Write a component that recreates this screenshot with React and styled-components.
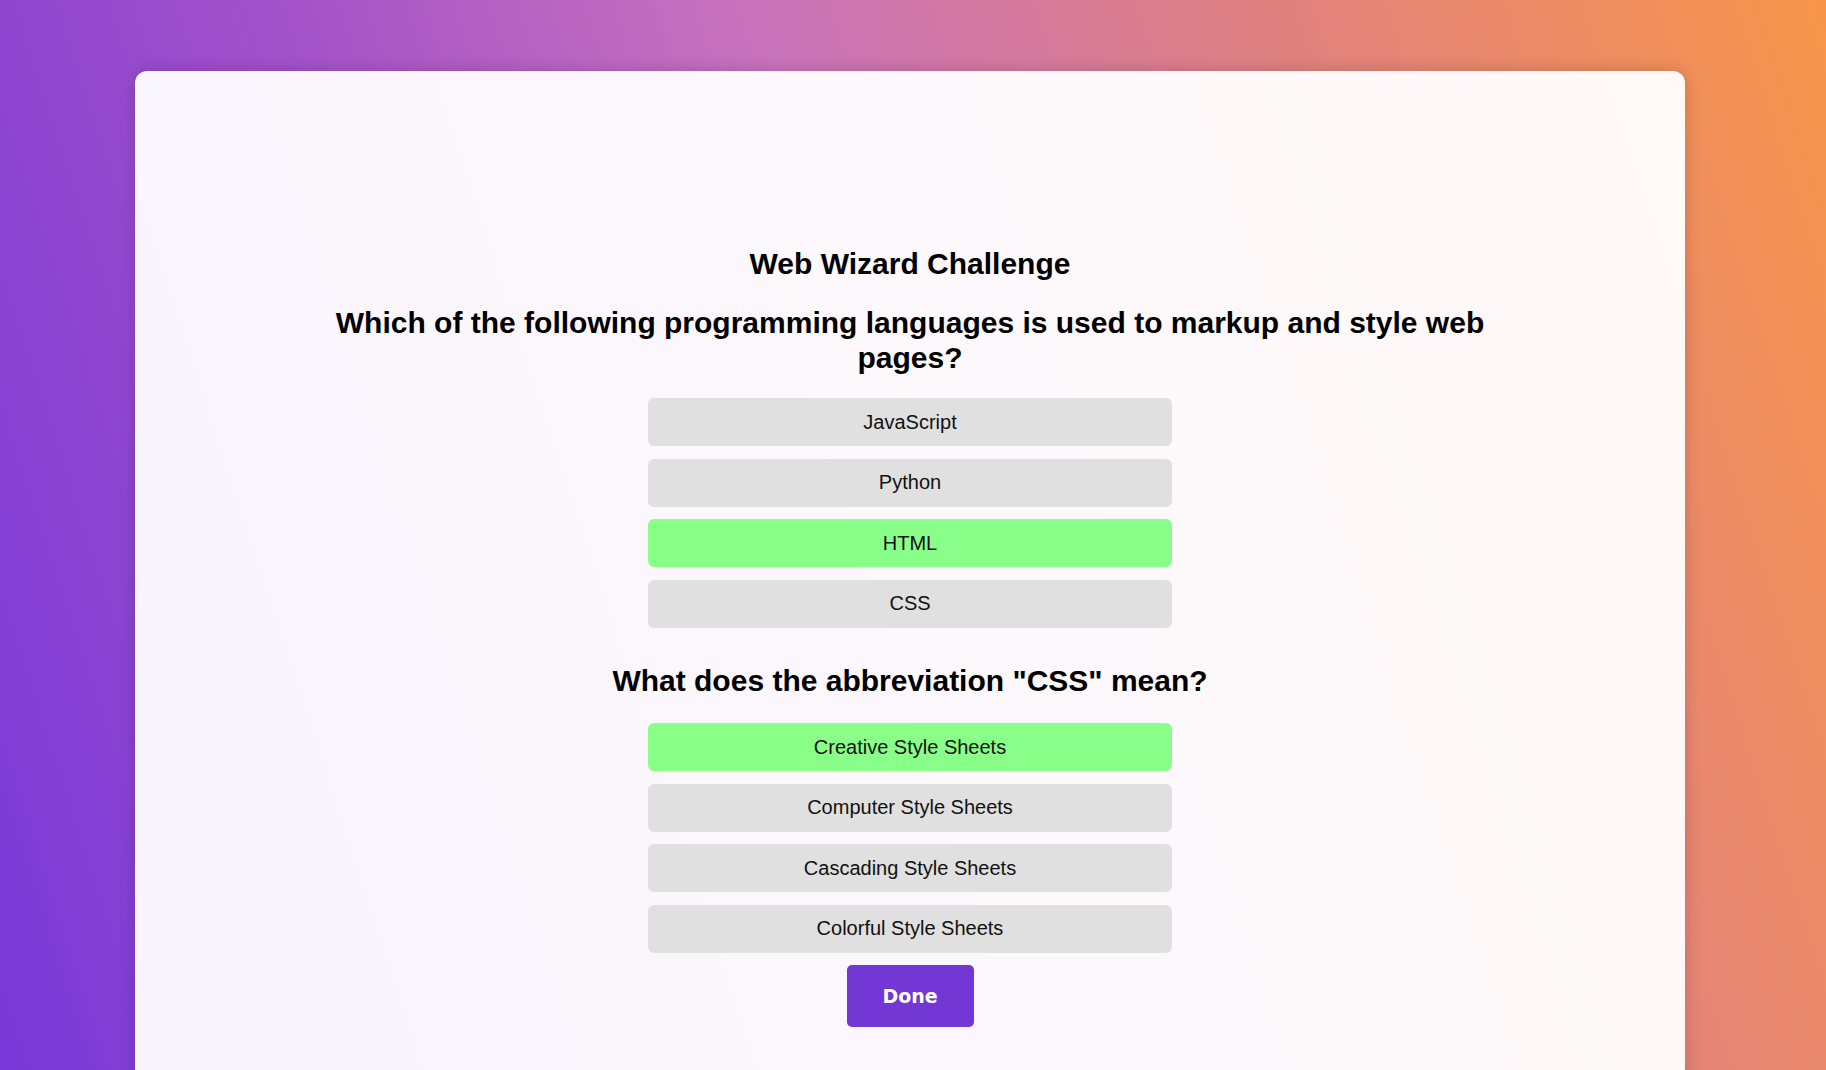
import React from "react";
import styled, { createGlobalStyle } from "styled-components";

const questions = [
  {
    text: "Which of the following programming languages is used to markup and style web pages?",
    options: ["JavaScript", "Python", "HTML", "CSS"],
    picked: "HTML",
  },
  {
    text: 'What does the abbreviation "CSS" mean?',
    options: [
      "Creative Style Sheets",
      "Computer Style Sheets",
      "Cascading Style Sheets",
      "Colorful Style Sheets",
    ],
    picked: "Creative Style Sheets",
  },
];

// Quiz page
function App() {
  const [answers, setAnswers] = React.useState(
    questions.map((q) => q.picked)
  );

  const pick = (qi, option) => {
    const next = [...answers];
    next[qi] = option;
    setAnswers(next);
  };

  return (
    <>
      <GlobalStyle />
      <Page>
        <Card>
          <Title>Web Wizard Challenge</Title>

          {questions.map((q, qi) => (
            <QuestionBlock key={qi} first={qi === 0}>
              <Question first={qi === 0}>{q.text}</Question>
              <OptionList>
                {q.options.map((option) => (
                  <Option
                    key={option}
                    selected={answers[qi] === option}
                    onClick={() => pick(qi, option)}
                  >
                    {option}
                  </Option>
                ))}
              </OptionList>
            </QuestionBlock>
          ))}

          <DoneButton>Done</DoneButton>
        </Card>
      </Page>
    </>
  );
}

// css styles
const GlobalStyle = createGlobalStyle`
  html, body {
    margin: 0;
    padding: 0;
  }
  body {
    font-family: "Liberation Sans", Arial, sans-serif;
    overflow-x: hidden;
  }
`;

const Page = styled.div`
  min-height: 100vh;
  box-sizing: border-box;
  padding: 71px 141px 40px 135px;
  background: linear-gradient(72deg, #7839d9 0%, #a151c9 28%, #c872bc 50%, #e2827c 76%, #f7964a 100%);
  background-attachment: fixed;
`;

const Card = styled.div`
  display: flex;
  flex-direction: column;
  align-items: center;
  box-sizing: border-box;
  padding: 176px 40px 140px;
  min-height: 1100px;
  background: rgba(255, 255, 255, 0.95);
  border-radius: 12px;
  box-shadow: 0 0 16px rgba(0, 0, 0, 0.18);
`;

const Title = styled.h2`
  margin: 0;
  font-size: 30px;
  font-weight: 700;
  line-height: 34px;
  color: #000;
  text-align: center;
`;

const QuestionBlock = styled.div`
  display: flex;
  flex-direction: column;
  align-items: center;
  width: 100%;
  margin-top: ${(props) => (props.first ? "25px" : "36px")};
`;

const Question = styled.h3`
  margin: 0 0 ${(props) => (props.first ? "23px" : "25px")};
  max-width: 1200px;
  font-size: 30px;
  font-weight: 700;
  line-height: 34.5px;
  color: #000;
  text-align: center;
`;

const OptionList = styled.div`
  display: flex;
  flex-direction: column;
  gap: 12.5px;
  width: 524px;
`;

const Option = styled.button`
  height: 48px;
  padding: 0 12px;
  border: none;
  border-radius: 6px;
  background: ${(props) => (props.selected ? "#89fe89" : "#e0e0e0")};
  color: #111;
  font-family: "Liberation Sans", Arial, sans-serif;
  font-size: 20px;
  cursor: pointer;
`;

const DoneButton = styled.button`
  margin-top: 12px;
  width: 127px;
  height: 62px;
  border: none;
  border-radius: 5px;
  background: #7337d6;
  color: #fff;
  font-family: "DejaVu Sans", Verdana, sans-serif;
  font-size: 19px;
  font-weight: 700;
  cursor: pointer;
`;

// Export Default
export default App;
